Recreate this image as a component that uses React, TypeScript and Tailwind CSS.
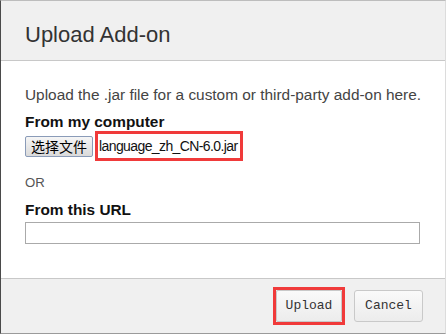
import React from 'react';

const sans = { fontFamily: '"Liberation Sans", Arial, sans-serif' };

const App = () => {
  return (
    <div
      className="w-[446px] h-[334px] flex flex-col bg-white border-l border-l-[#4a4a4a] border-t border-t-[#bdbdbd] border-r border-r-[#dcdcdc] border-b border-b-[#9a9a9a] font-['Liberation_Sans',Arial,sans-serif]"
    >
      {/* Header */}
      <div className="h-[60px] shrink-0 bg-[#f0f0f0] border-b border-[#c8c8c8] pl-6 pt-[21px]">
        <h2 className="text-[22px] leading-[26px] text-[#333]">Upload Add-on</h2>
      </div>

      {/* Body */}
      <div className="flex-1 flex flex-col px-6 pt-6">
        <p className="text-[15.4px] leading-[20px] text-[#444] whitespace-nowrap">
          Upload the .jar file for a custom or third-party add-on here.
        </p>
        <label className="mt-2 text-[15.4px] leading-[18px] font-bold text-[#111]">From my computer</label>
        <div className="h-[30px] flex items-center">
          <button className="h-[21px] w-[68px] border border-[#8a9bb8] rounded-[2px] bg-gradient-to-b from-[#f6f6f6] to-[#dadada] text-[14px] leading-[19px] text-black font-['Noto_Sans_CJK_SC',sans-serif]">
            选择文件
          </button>
          <div className="ml-[2px] h-[30px] w-[148px] border-[3px] border-[#f03a3a] flex items-center pl-[1px]">
            <span className="text-[14px] tracking-[-0.6px] text-[#111] whitespace-nowrap" style={sans}>
              language_zh_CN-6.0.jar
            </span>
          </div>
        </div>
        <span className="mt-[14px] text-[13.2px] leading-[16px] text-[#555]">OR</span>
        <label className="mt-[10px] text-[15.4px] leading-[18px] font-bold text-[#111]">From this URL</label>
        <input
          type="text"
          className="mt-[3px] h-[22px] w-[395px] border border-[#aaa] bg-white outline-none"
        />
      </div>

      {/* Footer */}
      <div className="h-[55px] shrink-0 bg-[#f0f0f0] border-t border-[#c8c8c8] flex items-start justify-end pt-2 pr-[22px] gap-[9px]">
        <div className="border-[3px] border-[#f03a3a]">
          <button className="block h-[32px] w-[66px] border border-[#c9c9c9] rounded-[2px] bg-gradient-to-b from-[#fafafa] to-[#ececec] text-[13px] font-light text-[#333] font-['Liberation_Mono',monospace]">
            Upload
          </button>
        </div>
        <button className="mt-[3px] h-[32px] w-[69px] border border-[#c9c9c9] rounded-[3px] bg-gradient-to-b from-[#fafafa] to-[#ececec] text-[13px] font-light text-[#333] font-['Liberation_Mono',monospace]">
          Cancel
        </button>
      </div>
    </div>
  );
};

export default App;
